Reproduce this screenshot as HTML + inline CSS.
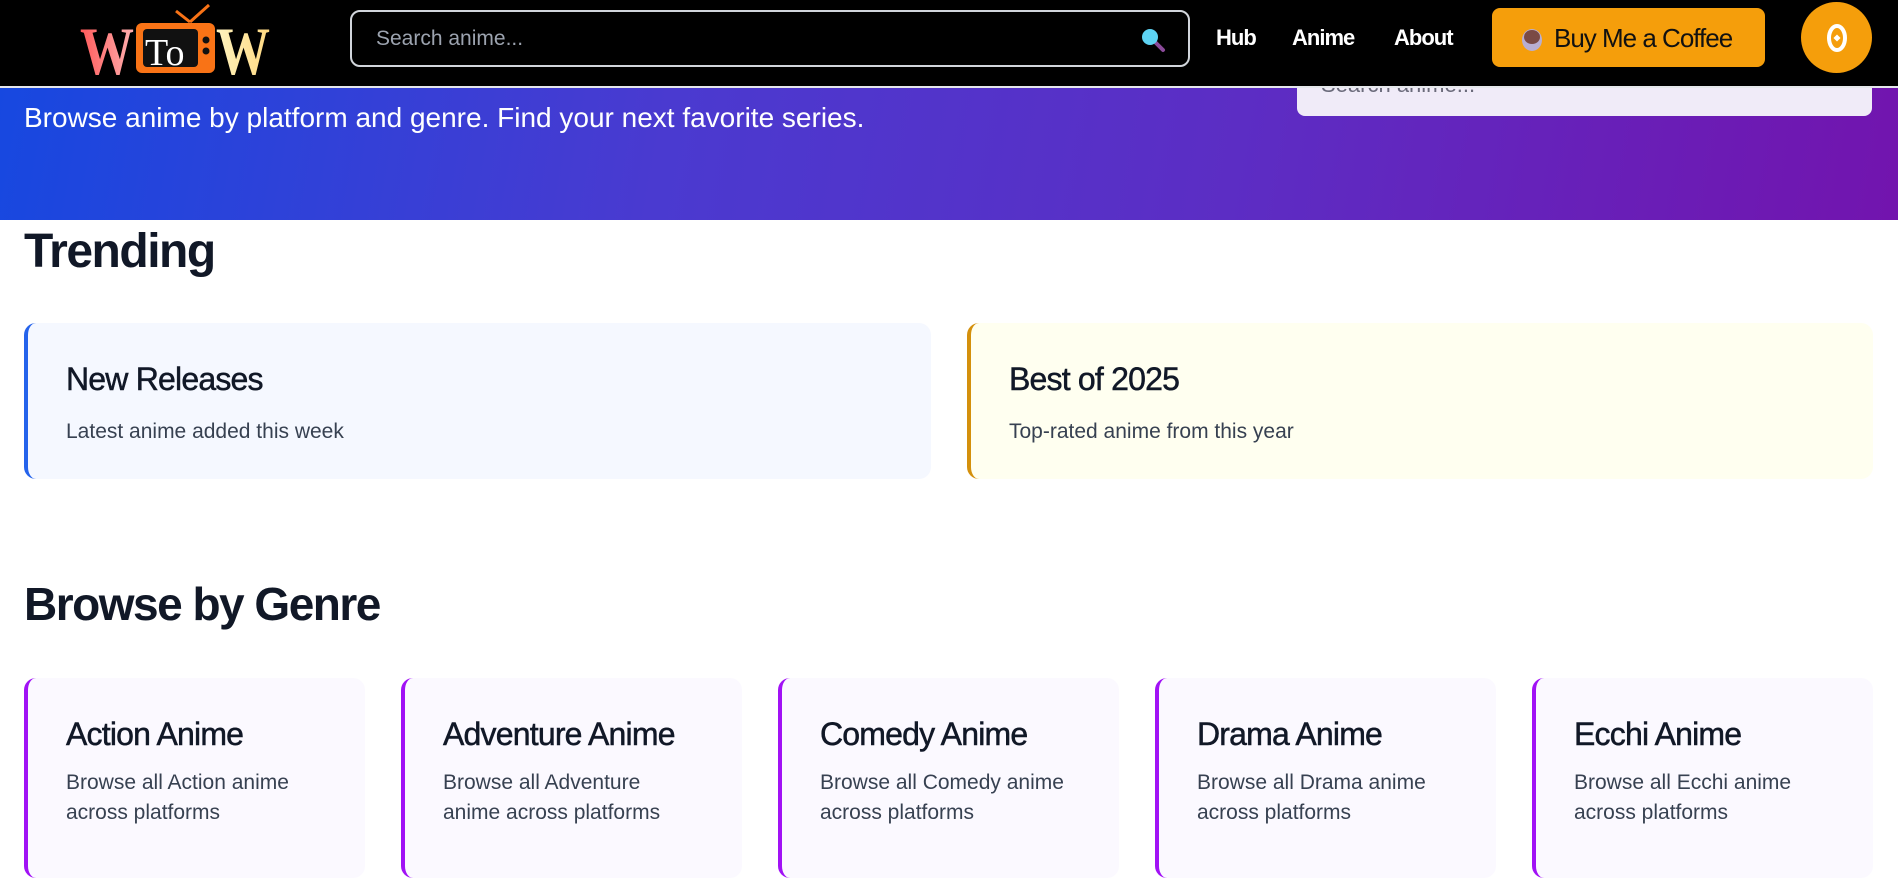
<!DOCTYPE html>
<html><head><meta charset="utf-8"><style>
*{margin:0;padding:0;box-sizing:border-box}
body{width:1898px;height:861px;overflow:hidden;background:#fff;font-family:"Liberation Sans",sans-serif;position:relative}
.hdr{position:absolute;left:0;top:0;width:1898px;height:88px;background:#000;border-bottom:2px solid #e5e7eb;z-index:3}
.hero{position:absolute;left:0;top:88px;width:1898px;height:132px;background:linear-gradient(100deg,#1748e0 0%,#4a3ad0 35%,#5c2dc4 65%,#7214ae 100%)}
.hero p{position:absolute;left:24px;top:14px;color:#fff;font-size:28px}
.ovl{position:absolute;left:1297px;top:60px;width:575px;height:56px;background:#f0ebf8;border-radius:8px;z-index:2}
.ovl span{position:absolute;left:24px;top:12px;font-size:22px;color:#6b6b7b}
.srch{position:absolute;left:350px;top:10px;width:840px;height:57px;border:2px solid #d1d5db;border-radius:10px}
.srch span{position:absolute;left:24px;top:15px;color:#9ca3af;font-size:21px}
.nav{position:absolute;top:25px;color:#fff;font-weight:bold;font-size:22px;letter-spacing:-1px}
.btn{position:absolute;left:1492px;top:8px;width:273px;height:59px;background:#f59e0b;border-radius:8px;font-size:26px;color:#111;padding:15px 0 0 62px;letter-spacing:-1px}
.circ{position:absolute;left:1801px;top:2px;width:71px;height:71px;border-radius:50%;background:#f59e0b}
h2{position:absolute;left:24px;color:#111827;font-weight:bold;letter-spacing:-1.5px}
.card{position:absolute;border-radius:12px;overflow:hidden}
.card h3{position:absolute;left:38px;font-weight:normal;color:#111827;font-size:32px;letter-spacing:-0.8px;-webkit-text-stroke:0.5px #111827}
.card p{position:absolute;left:38px;color:#374151;font-size:21px;line-height:30px}
.t{top:323px;height:156px;width:907px}
.t h3{top:38px}.t p{top:94px}
.g{top:678px;height:200px;width:341px;background:#fbf9ff;border-left:4px solid #a112f5}
.g h3{top:38px}.g p{top:90px;width:245px}
</style></head><body>
<div class="hero"><p>Browse anime by platform and genre. Find your next favorite series.</p></div>
<div class="ovl"><span>Search anime...</span></div>
<div class="hdr">
 <svg style="position:absolute;left:78px;top:4px" width="195" height="72" viewBox="0 0 195 72">
  <defs><linearGradient id="a" x1="0" x2="1"><stop offset="0" stop-color="#ff5a5a"/><stop offset="1" stop-color="#ffb0b0"/></linearGradient>
  <linearGradient id="b" x1="0" x2="1"><stop offset="0" stop-color="#fff4c0"/><stop offset="1" stop-color="#ffd880"/></linearGradient></defs>
  <line x1="112" y1="18" x2="131" y2="1" stroke="#f97316" stroke-width="3"/><line x1="112" y1="18" x2="98" y2="7" stroke="#f97316" stroke-width="3"/>
  <text x="2" y="70" font-family="Liberation Serif" font-weight="bold" font-size="68" textLength="54" lengthAdjust="spacingAndGlyphs" fill="url(#a)">W</text>
  <rect x="58" y="19" width="79" height="50" rx="6" fill="#f97316"/><rect x="65" y="25" width="55" height="38" rx="4" fill="#111"/>
  <circle cx="128" cy="36" r="3.5" fill="#111"/><circle cx="128" cy="47" r="3.5" fill="#111"/>
  <text x="67" y="61" font-family="Liberation Serif" font-size="38" fill="#fff">To</text>
  <text x="138" y="70" font-family="Liberation Serif" font-weight="bold" font-size="68" textLength="54" lengthAdjust="spacingAndGlyphs" fill="url(#b)">W</text>
 </svg>
 <div class="srch"><span>Search anime...</span>
  <svg style="position:absolute;right:22px;top:15px" width="26" height="26" viewBox="0 0 26 26"><line x1="15" y1="15" x2="23" y2="23" stroke="#8b4a9a" stroke-width="4" stroke-linecap="round"/><circle cx="10" cy="10" r="8" fill="#5dd3f3"/></svg></div>
 <div class="nav" style="left:1216px">Hub</div>
 <div class="nav" style="left:1292px">Anime</div>
 <div class="nav" style="left:1394px">About</div>
 <div class="btn"><svg style="position:absolute;left:28px;top:18px" width="24" height="26"><ellipse cx="12" cy="14" rx="10" ry="11" fill="#b8aed0"/><ellipse cx="12" cy="11" rx="8" ry="7" fill="#7a4a45"/></svg>Buy Me a Coffee</div>
 <div class="circ"><svg style="position:absolute;left:25px;top:21px" width="22" height="30"><ellipse cx="11" cy="15" rx="8" ry="12" fill="none" stroke="#fff" stroke-width="4"/><rect x="8.5" y="12.5" width="5" height="5" transform="rotate(45 11 15)" fill="#fff"/></svg></div>
</div>
<h2 style="top:224px;font-size:48px">Trending</h2>
<div class="card t" style="left:24px;background:#f5f8ff;border-left:4px solid #2563eb"><h3>New Releases</h3><p>Latest anime added this week</p></div>
<div class="card t" style="left:967px;width:906px;background:#fffff0;border-left:4px solid #d4900c"><h3>Best of 2025</h3><p>Top-rated anime from this year</p></div>
<h2 style="top:577px;font-size:46px">Browse by Genre</h2>
<div class="card g" style="left:24px"><h3>Action Anime</h3><p>Browse all Action anime across platforms</p></div>
<div class="card g" style="left:401px"><h3>Adventure Anime</h3><p>Browse all Adventure anime across platforms</p></div>
<div class="card g" style="left:778px"><h3>Comedy Anime</h3><p>Browse all Comedy anime across platforms</p></div>
<div class="card g" style="left:1155px"><h3>Drama Anime</h3><p>Browse all Drama anime across platforms</p></div>
<div class="card g" style="left:1532px"><h3>Ecchi Anime</h3><p>Browse all Ecchi anime across platforms</p></div>
</body></html>
